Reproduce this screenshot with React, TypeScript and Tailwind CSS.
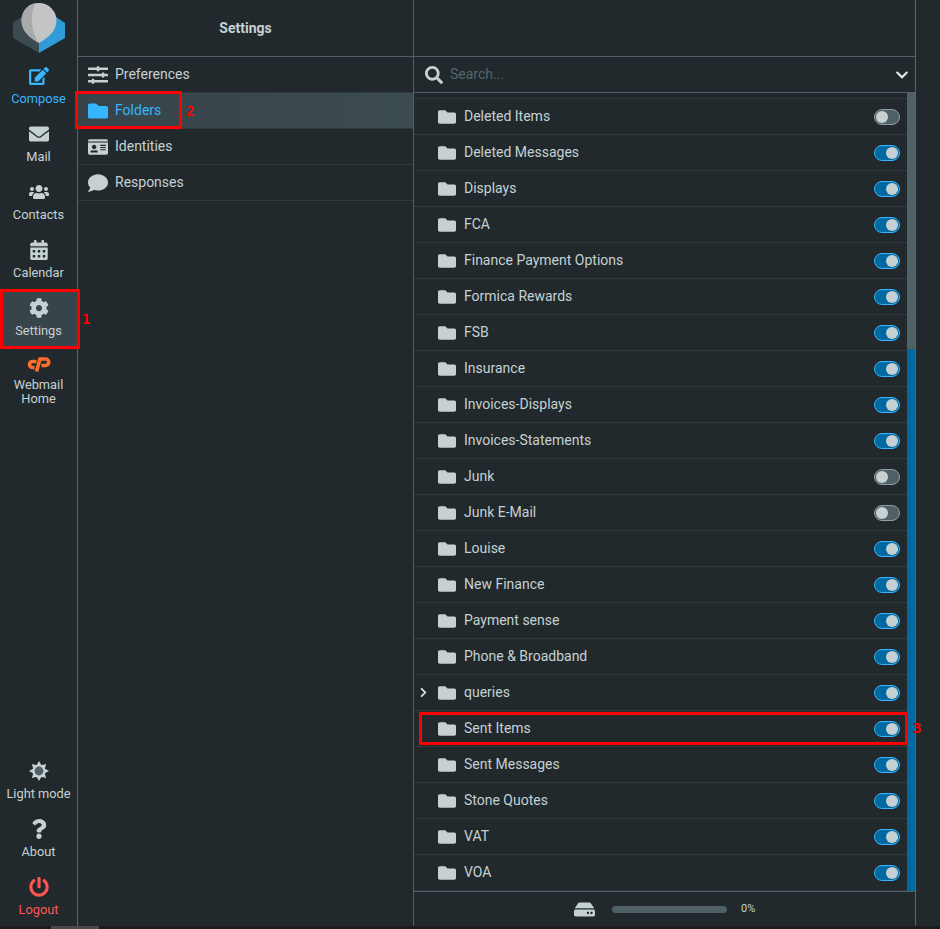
import { ReactNode } from "react";
import {
    FaCalendarAlt,
    FaChevronDown,
    FaChevronRight,
    FaCog,
    FaComment,
    FaEdit,
    FaEnvelope,
    FaFolder,
    FaHdd,
    FaIdCard,
    FaPowerOff,
    FaQuestion,
    FaSearch,
    FaSlidersH,
    FaUsers,
} from "react-icons/fa";

type Folder = { name: string; on: boolean; children?: boolean };

const folders: Folder[] = [
    { name: "Deleted Items", on: false },
    { name: "Deleted Messages", on: true },
    { name: "Displays", on: true },
    { name: "FCA", on: true },
    { name: "Finance Payment Options", on: true },
    { name: "Formica Rewards", on: true },
    { name: "FSB", on: true },
    { name: "Insurance", on: true },
    { name: "Invoices-Displays", on: true },
    { name: "Invoices-Statements", on: true },
    { name: "Junk", on: false },
    { name: "Junk E-Mail", on: false },
    { name: "Louise", on: true },
    { name: "New Finance", on: true },
    { name: "Payment sense", on: true },
    { name: "Phone & Broadband", on: true },
    { name: "queries", on: true, children: true },
    { name: "Sent Items", on: true },
    { name: "Sent Messages", on: true },
    { name: "Stone Quotes", on: true },
    { name: "VAT", on: true },
    { name: "VOA", on: true },
];

const NavItem = function ({
    icon,
    label,
    className = "",
}: {
    icon: ReactNode;
    label: ReactNode;
    className?: string;
}) {
    return (
        <div className={`flex flex-col items-center pt-[8px] text-[12.8px] leading-[14px] text-center ${className}`}>
            <div className="h-[20px] flex items-center justify-center text-[20px] mb-[6px]">{icon}</div>
            {label}
        </div>
    );
};

const SettingsRow = function ({
    icon,
    label,
    active = false,
}: {
    icon: ReactNode;
    label: string;
    active?: boolean;
}) {
    return (
        <div
            className={`h-[36px] flex items-center border-b border-[#2f3a3e] ${
                active ? "bg-[linear-gradient(90deg,#37444a,#3c4b50)] text-[#37b6ff]" : "text-[#c5d1d3]"
            }`}
        >
            <div className="w-[37px] flex justify-center text-[20px] pl-[2px]">{icon}</div>
            <span className="text-[14px]">{label}</span>
        </div>
    );
};

const Toggle = function ({ on }: { on: boolean }) {
    return (
        <div
            className={`w-[26px] h-[16px] rounded-full border flex items-center px-[1px] ${
                on ? "bg-[#0069a0] border-[#37b6ff] justify-end" : "bg-[#4f6066] border-[#8f9ca0] justify-start"
            }`}
        >
            <div className="w-[12px] h-[12px] rounded-full bg-[#c5d1d3]" />
        </div>
    );
};

const FolderRow = function ({ name, on, children }: Folder) {
    return (
        <div className="h-[36px] relative flex items-center border-b border-[#2f3a3e] pr-[7px]">
            {children && <FaChevronRight className="absolute left-[4px] top-[12px] text-[11px] text-[#dfe6e7]" />}
            <FaFolder className="ml-[24px] text-[18px] text-[#c5d1d3]" />
            <span className="ml-[8px] text-[14px] text-[#c5d1d3] flex-1">{name}</span>
            <Toggle on={on} />
        </div>
    );
};

const RoundcubeLogo = function () {
    return (
        <svg width="52" height="54" viewBox="0 0 52 54">
            <path d="M26 10 L8 15 L0 21 L0 36 L26 51 Z" fill="#3c4b52" />
            <path d="M26 10 L43 15 L52 21 L52 36 L26 51 Z" fill="#2f9cd8" />
            <path d="M8.5 18.5 A17.5 17.5 0 0 1 43.5 18.5 C43.5 29 35 36 26 41 C17 36 8.5 29 8.5 18.5 Z" fill="#c3c4c5" />
            <path d="M8.5 18.5 C8.5 9 15 2 23 1 C17 9 17 28 26 41 C17 36 8.5 29 8.5 18.5 Z" fill="#a8a9ab" />
        </svg>
    );
};

// sun with a hollow centre, rays drawn one by one
const SunIcon = function () {
    return (
        <svg width="20" height="20" viewBox="0 0 20 20" fill="#c5d1d3">
            {[0, 45, 90, 135, 180, 225, 270, 315].map((a) => (
                <path key={a} d="M10 0 L12.6 4.5 L7.4 4.5 Z" transform={`rotate(${a} 10 10)`} />
            ))}
            <circle cx="10" cy="10" r="6.6" />
            <circle cx="10" cy="10" r="4.4" fill="#4f6066" />
        </svg>
    );
};

const CpanelLogo = function () {
    return (
        <svg width="24" height="15" viewBox="0 0 24 15" fill="none" stroke="#ff6c2c" strokeWidth="3.6">
            <path d="M9.5 4.5 H5.5 A3 3 0 0 0 5.5 10.5 H7.5" />
            <path d="M9.5 14.5 L13 2 H18.5 A3.2 3.2 0 0 1 18.5 8.5 H14.5" />
        </svg>
    );
};

export default function App() {
    return (
        <div className="relative w-[940px] h-[929px] overflow-hidden bg-[#21292c] font-['Roboto',sans-serif] flex flex-col">
            <div className="flex flex-1 min-h-0">
                {/* task menu */}
                <div className="w-[78px] shrink-0 border-r border-[#5b666a] flex flex-col text-[#c5d1d3]">
                    <div className="h-[58px] shrink-0 flex justify-center pt-[2px] pl-[1px]">
                        <RoundcubeLogo />
                    </div>
                    <NavItem className="h-[58px] text-[#37b6ff]" icon={<FaEdit />} label="Compose" />
                    <NavItem className="h-[58px]" icon={<FaEnvelope />} label="Mail" />
                    <NavItem className="h-[58px]" icon={<FaUsers />} label="Contacts" />
                    <NavItem className="h-[58px]" icon={<FaCalendarAlt />} label="Calendar" />
                    <NavItem className="h-[58px] bg-[#37444a]" icon={<FaCog />} label="Settings" />
                    <div className="flex flex-col items-center pt-[9px] text-[12.8px] leading-[14px] text-center">
                        <div className="h-[15px] mb-[6px]">
                            <CpanelLogo />
                        </div>
                        Webmail
                        <br />
                        Home
                    </div>
                    <div className="mt-auto">
                        <NavItem className="h-[58px]" icon={<SunIcon />} label="Light mode" />
                        <NavItem className="h-[58px]" icon={<FaQuestion />} label="About" />
                        <NavItem className="h-[57px] text-[#ff5552]" icon={<FaPowerOff />} label="Logout" />
                    </div>
                </div>

                {/* settings sections */}
                <div className="w-[336px] shrink-0 border-r border-[#4f6066] flex flex-col">
                    <div className="h-[57px] shrink-0 border-b border-[#4f6066] flex items-center justify-center text-[14px] font-bold text-[#c5d1d3]">
                        Settings
                    </div>
                    <SettingsRow icon={<FaSlidersH />} label="Preferences" />
                    <SettingsRow icon={<FaFolder />} label="Folders" active />
                    <SettingsRow icon={<FaIdCard />} label="Identities" />
                    <SettingsRow icon={<FaComment />} label="Responses" />
                </div>

                {/* folder list */}
                <div className="w-[502px] shrink-0 border-r border-[#5b666a] flex flex-col">
                    <div className="h-[57px] shrink-0 border-b border-[#4f6066]" />
                    <div className="h-[36px] shrink-0 border-b border-[#4f6066] flex items-center pl-[11px] pr-[6px] text-[#c5d1d3]">
                        <FaSearch className="text-[18px]" />
                        <span className="ml-[7px] flex-1 text-[14px] text-[#56666c]">Search...</span>
                        <FaChevronDown className="text-[14px] text-[#dfe6e7]" />
                    </div>
                    <div className="flex flex-1 min-h-0">
                        <div className="flex-1 min-w-0 overflow-hidden">
                            <div className="h-[6px] border-b border-[#2f3a3e]" />
                            {folders.map((f) => (
                                <FolderRow key={f.name} {...f} />
                            ))}
                        </div>
                        <div className="w-[8px] shrink-0 flex flex-col">
                            <div className="h-[256px] bg-[#4f6066]" />
                            <div className="flex-1 bg-[#0069a0]" />
                        </div>
                    </div>
                    <div className="h-[35px] shrink-0 border-t border-[#4f6066] flex items-center text-[#c5d1d3]">
                        <FaHdd className="ml-[160px] text-[21px]" />
                        <div className="ml-[17px] w-[115px] h-[7px] rounded-full bg-[#4f6066]" />
                        <span className="ml-[14px] pt-[1px] text-[11px]">0%</span>
                    </div>
                </div>
            </div>

            {/* page scrollbar */}
            <div className="h-[3px] shrink-0 bg-[#1c1c1c] pl-[51px]">
                <div className="w-[48px] h-full bg-[#4a4a4a]" />
            </div>

            {/* red annotations */}
            <div className="absolute left-0 top-[289px] w-[80px] h-[60px] border-[3px] border-[#ff0000]" />
            <div className="absolute left-[75px] top-[91px] w-[107px] h-[38px] border-[3px] border-[#ff0000]" />
            <div className="absolute left-[419px] top-[712px] w-[489px] h-[33px] border-[3px] border-[#ff0000]" />
            <span className="absolute left-[82px] top-[309px] text-[14px] font-bold font-['DejaVu_Sans_Mono',monospace] text-[#ff0000]">1</span>
            <span className="absolute left-[186px] top-[101px] text-[14px] font-bold font-['DejaVu_Sans_Mono',monospace] text-[#ff0000]">2</span>
            <span className="absolute left-[913px] top-[718px] text-[14px] font-bold font-['DejaVu_Sans_Mono',monospace] text-[#ff0000]">3</span>
        </div>
    );
}
